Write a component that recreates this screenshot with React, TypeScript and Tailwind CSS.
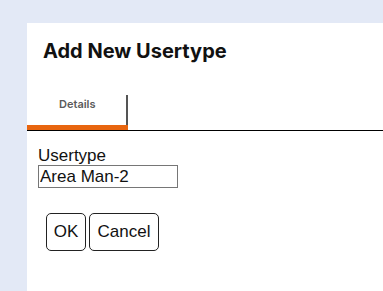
export default function App() {
  return (
    <div className="w-[383px] h-[291px] bg-[#e3e9f6] pl-[27px] pt-[23px] overflow-hidden">
      <div className="bg-white h-full flex flex-col">
        <h1 className="pl-[16px] pt-[15px] h-[72px] text-[20px] font-bold text-[#111] leading-[26px]" style={{ fontFamily: "Inter, sans-serif" }}>
          Add New Usertype
        </h1>
        <div className="flex border-b border-black h-[36px]">
          <div className="w-[101px] border-r-2 border-[#555] mt-0 flex flex-col">
            <div className="flex-1 text-[11px] font-semibold text-[#5a5a5a] pl-[32px] pt-[1px]" style={{ fontFamily: "Inter, sans-serif" }}>
              Details
            </div>
            <div className="h-[5px] bg-[#e8650f] mr-[-2px]" />
          </div>
        </div>
        <div className="pl-[11px] pt-[15px] flex flex-col items-start" style={{ fontFamily: "'Liberation Sans', Arial, sans-serif" }}>
          <label className="text-[17px] leading-[19px] text-[#111]">Usertype</label>
          <input
            defaultValue="Area Man-2"
            className="w-[140px] h-[23px] border border-[#767676] px-[1px] text-[17px] text-[#111] outline-none"
            style={{ fontFamily: "'Liberation Sans', Arial, sans-serif" }}
          />
          <div className="flex gap-[3px] ml-[8px] mt-[25px]">
            <button className="h-[38px] w-[40px] border border-[#222] rounded-[5px] text-[17px] text-[#111] bg-white">OK</button>
            <button className="h-[38px] w-[70px] border border-[#222] rounded-[5px] text-[17px] text-[#111] bg-white">Cancel</button>
          </div>
        </div>
      </div>
    </div>
  );
}
